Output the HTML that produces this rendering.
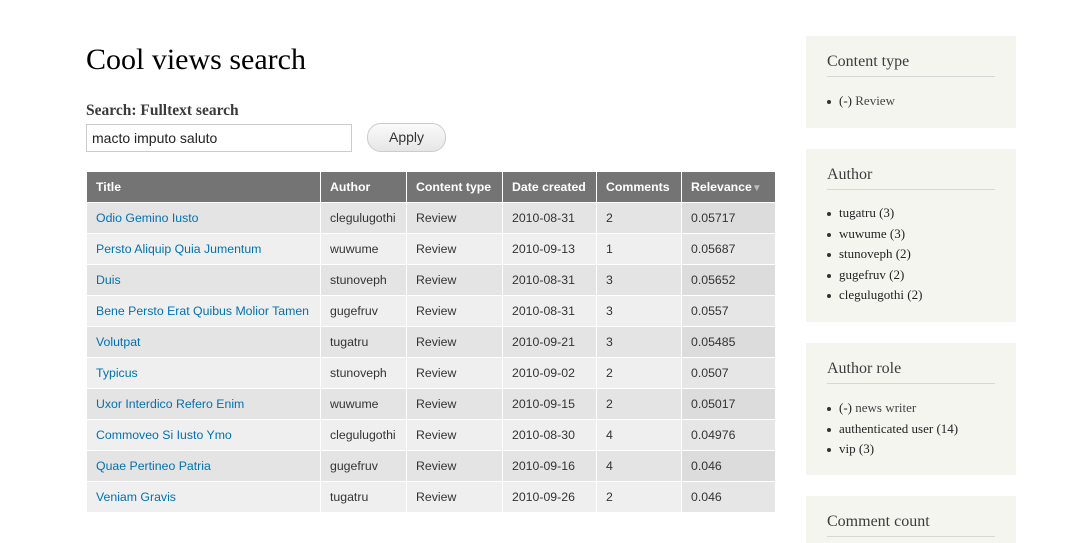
<!DOCTYPE html>
<html><head><style>
html,body{margin:0;background:#fff;width:1083px;height:543px;overflow:hidden;position:relative;font-family:"Liberation Sans",sans-serif;}
h1{position:absolute;left:86px;top:43px;margin:0;font-weight:normal;font-size:30px;color:#000;font-family:"Liberation Serif",serif;}
.lbl{position:absolute;left:86px;top:102px;font-weight:bold;font-size:15.5px;color:#3b3b3b;font-family:"Liberation Serif",serif;}
.inp{position:absolute;left:86px;top:124px;height:26px;border:1px solid #ccc;box-sizing:content-box;font-size:14px;line-height:26px;padding-left:5px;width:259px;color:#222;}
.btn{position:absolute;left:367px;top:123px;width:77px;height:27px;border:1px solid #ccc;border-radius:14px;background:linear-gradient(#fafafa,#e6e6e6);font-size:14px;line-height:27px;text-align:center;color:#333;}
table{position:absolute;left:86px;top:171px;border-collapse:collapse;font-size:12.3px;}
th{background:#747474;color:#fff;text-align:left;height:30px;padding:0 9px;border:1px solid #fff;font-weight:bold;}
td{height:30px;padding:0 9px;border:1px solid #fff;color:#333;}
tr.o td{background:#e4e4e4}tr.e td{background:#efefef}
tr.o td.s{background:#dcdcdc}tr.e td.s{background:#e6e6e6}
td a{color:#0071b3;text-decoration:none}
.blk{position:absolute;left:806px;width:210px;background:#f5f5f0;}
.blk h2{margin:0;position:absolute;left:21px;top:17px;width:168px;font-weight:normal;font-size:16px;color:#3b3b3b;border-bottom:1px solid #d6d6d6;padding-bottom:5px;font-family:"Liberation Serif",serif;}
.blk ul{position:absolute;left:21px;margin:0;padding:0;list-style:none;font-size:13px;color:#222;font-family:"Liberation Serif",serif;}
.blk li{height:20.5px;line-height:14px;}
.blk li:before{content:"";display:inline-block;width:4px;height:4px;border-radius:2px;background:#333;margin-right:8px;vertical-align:middle;}
.dim{color:#444}
</style></head><body>
<h1>Cool views search</h1>
<div class="lbl">Search: Fulltext search</div>
<div class="inp">macto imputo saluto</div>
<div class="btn">Apply</div>
<table>
<tr><th style="width:215px">Title</th><th style="width:67px">Author</th><th style="width:77px">Content type</th><th style="width:75px">Date created</th><th style="width:66px">Comments</th><th style="width:75px">Relevance<span style="color:#bbb;font-size:10px">▼</span></th></tr>
<tr class="o"><td><a>Odio Gemino Iusto</a></td><td>clegulugothi</td><td>Review</td><td>2010-08-31</td><td>2</td><td class="s">0.05717</td></tr>
<tr class="e"><td><a>Persto Aliquip Quia Jumentum</a></td><td>wuwume</td><td>Review</td><td>2010-09-13</td><td>1</td><td class="s">0.05687</td></tr>
<tr class="o"><td><a>Duis</a></td><td>stunoveph</td><td>Review</td><td>2010-08-31</td><td>3</td><td class="s">0.05652</td></tr>
<tr class="e"><td><a>Bene Persto Erat Quibus Molior Tamen</a></td><td>gugefruv</td><td>Review</td><td>2010-08-31</td><td>3</td><td class="s">0.0557</td></tr>
<tr class="o"><td><a>Volutpat</a></td><td>tugatru</td><td>Review</td><td>2010-09-21</td><td>3</td><td class="s">0.05485</td></tr>
<tr class="e"><td><a>Typicus</a></td><td>stunoveph</td><td>Review</td><td>2010-09-02</td><td>2</td><td class="s">0.0507</td></tr>
<tr class="o"><td><a>Uxor Interdico Refero Enim</a></td><td>wuwume</td><td>Review</td><td>2010-09-15</td><td>2</td><td class="s">0.05017</td></tr>
<tr class="e"><td><a>Commoveo Si Iusto Ymo</a></td><td>clegulugothi</td><td>Review</td><td>2010-08-30</td><td>4</td><td class="s">0.04976</td></tr>
<tr class="o"><td><a>Quae Pertineo Patria</a></td><td>gugefruv</td><td>Review</td><td>2010-09-16</td><td>4</td><td class="s">0.046</td></tr>
<tr class="e"><td><a>Veniam Gravis</a></td><td>tugatru</td><td>Review</td><td>2010-09-26</td><td>2</td><td class="s">0.046</td></tr>
</table>
<div class="blk" style="top:36px;height:92px"><h2>Content type</h2><ul style="top:58px"><li>(-) <span class="dim">Review</span></li></ul></div>
<div class="blk" style="top:149px;height:173px"><h2>Author</h2><ul style="top:57px"><li>tugatru (3)</li><li>wuwume (3)</li><li>stunoveph (2)</li><li>gugefruv (2)</li><li>clegulugothi (2)</li></ul></div>
<div class="blk" style="top:343px;height:132px"><h2>Author role</h2><ul style="top:58px"><li>(-) <span class="dim">news writer</span></li><li>authenticated user (14)</li><li>vip (3)</li></ul></div>
<div class="blk" style="top:496px;height:60px"><h2>Comment count</h2></div>
</body></html>
